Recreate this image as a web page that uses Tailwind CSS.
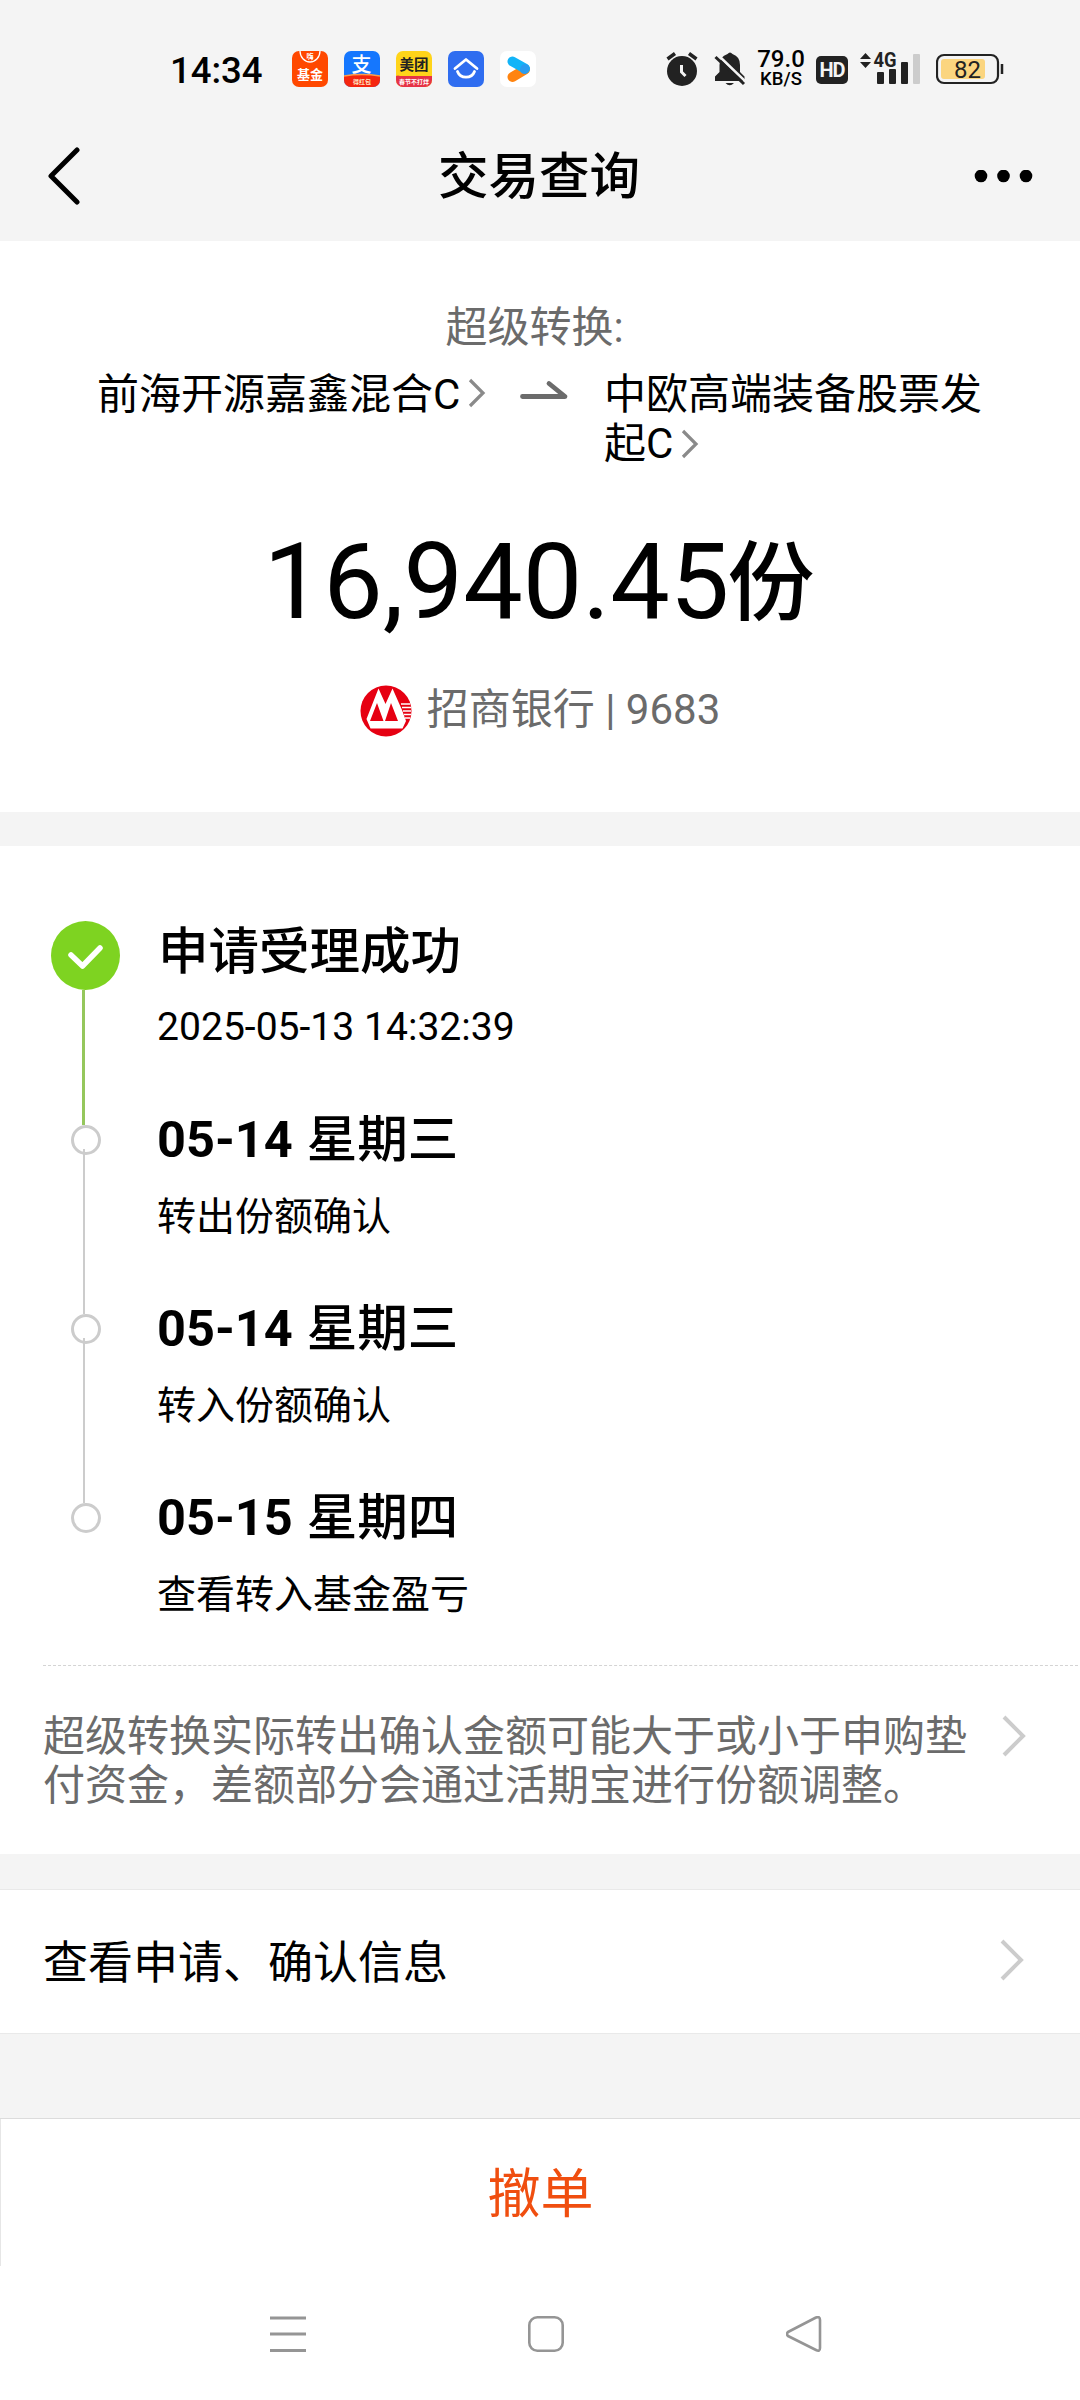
<!doctype html>
<html lang="zh-CN">

<head>
  <meta charset="UTF-8" />
  <meta name="viewport" content="width=device-width, initial-scale=1.0" />
  <title>交易查询</title>
  <script src="https://cdn.jsdelivr.net/npm/@tailwindcss/browser@4"></script>
</head>

<body class="w-[1080px] h-[2400px] flex flex-col overflow-hidden bg-[#f4f4f4] text-black font-[Roboto,'Noto_Sans_CJK_SC',sans-serif]">

  <!-- status bar -->
  <div class="flex items-center h-[113px] pt-[25px] pl-[170px] shrink-0">
    <span class="w-[122px] pt-[3px] text-[36.5px] leading-[40px] font-medium">14:34</span>
    <div class="flex gap-4 w-[374px]">
      <svg class="size-9" viewBox="0 0 36 36">
        <rect width="36" height="36" rx="7" fill="#ff4800" />
        <path d="M8 0a10 11 0 0 0 20 0" fill="none" stroke="#fff" stroke-width="1.3" />
        <text x="18" y="8" font-size="7" font-weight="700" fill="#fff" text-anchor="middle">嗨</text>
        <text x="18" y="28" font-size="13" font-weight="700" fill="#fff" text-anchor="middle">基金</text>
      </svg>
      <svg class="size-9" viewBox="0 0 36 36">
        <rect width="36" height="36" rx="7" fill="#1577fe" />
        <path d="M0 25Q18 22 36 25V29a7 7 0 0 1-7 7H7a7 7 0 0 1-7-7z" fill="#f5260f" />
        <path d="M0 25Q18 22 36 25" fill="none" stroke="#ff9c4a" stroke-width="1.5" />
        <text x="17.500" y="21" font-size="20" font-weight="500" fill="#fff" text-anchor="middle">支</text>
        <text x="18" y="32.500" font-size="6" font-weight="700" fill="#ffe9c8" text-anchor="middle">得红包</text>
      </svg>
      <svg class="size-9" viewBox="0 0 36 36">
        <rect width="36" height="36" rx="7" fill="#ffd41a" />
        <path d="M0 25Q2 24 4 25H36V29a7 7 0 0 1-7 7H7a7 7 0 0 1-7-7z" fill="#e63246" />
        <text x="18" y="19" font-size="14.500" font-weight="700" fill="#222" text-anchor="middle">美团</text>
        <text x="18" y="33" font-size="6" font-weight="700" fill="#fff" text-anchor="middle">春节不打烊</text>
      </svg>
      <svg class="size-9" viewBox="0 0 36 36">
        <rect width="36" height="36" rx="7" fill="#2f6df0" />
        <path d="M7 17.500L18 8.500L29 17.500" fill="none" stroke="#fff" stroke-width="2.800" stroke-linecap="round" stroke-linejoin="round" />
        <path d="M9.500 20.500a9 8.500 0 0 0 17 0" fill="none" stroke="#fff" stroke-width="2.800" stroke-linecap="round" />
      </svg>
      <svg class="size-9" viewBox="0 0 36 36">
        <rect width="36" height="36" rx="7" fill="#fff" />
        <path d="M12.500 26L25 18.500" stroke="#ff8410" stroke-width="10" stroke-linecap="round" />
        <path d="M12.500 10.500L25 17.500" stroke="#12b4f8" stroke-width="10" stroke-linecap="round" />
        <path d="M25 17.500L24.500 18.500" stroke="#2a9cf0" stroke-width="9" stroke-linecap="round" />
      </svg>
    </div>
    <!-- alarm -->
    <svg class="w-8 h-9 mr-4" viewBox="0 0 32 36" fill="none" stroke="#222">
      <circle cx="16" cy="20" r="15" fill="#222" stroke="none" />
      <path d="M1.500 8L9 2.500M23 2.500L30.500 8" stroke-width="3.500" />
      <path d="M15.500 14V21L19.500 25" stroke="#f4f4f4" stroke-width="3" />
    </svg>
    <!-- muted bell -->
    <svg class="w-8 h-9 mr-3" viewBox="0 0 32 36">
      <path d="M13.500 3Q16 0 18.500 3Q26 5.500 26 14V21L30.500 25.500V30H1V25.500L5.500 21V14Q5.500 5.500 13.500 3z" fill="#222" />
      <path d="M11.500 32H20Q15.700 36.500 11.500 32z" fill="#222" />
      <path d="M4 4L32 31" stroke="#f4f4f4" stroke-width="2.500" />
      <path d="M1.500 6L30 33" stroke="#222" stroke-width="3" />
    </svg>
    <div class="w-[48px] mr-[10px] -ml-px flex flex-col items-center font-medium whitespace-nowrap">
      <span class="text-[24px] leading-[20px]">79.0</span>
      <span class="text-[18.5px] leading-[20px]">KB/S</span>
    </div>
    <div class="w-8 h-7 mt-0.5 ml-px mr-3 rounded-[5px] bg-[#222] text-[#f4f4f4] text-[20px] leading-[28px] font-bold text-center tracking-[-1px]">HD</div>
    <!-- mobile signal -->
    <svg class="w-[62px] h-9 mr-[14px] overflow-visible" viewBox="0 0 62 36" fill="#222">
      <path d="M0 8L5.500 2L11 8zM0 11H11L5.500 17z" />
      <text x="13.500" y="16" font-size="20" font-weight="700" textLength="23" lengthAdjust="spacingAndGlyphs">4G</text>
      <rect x="17" y="21" width="7" height="12" rx="1" />
      <rect x="29" y="18" width="7" height="15" rx="1" />
      <rect x="41" y="11" width="7" height="22" rx="1" />
      <rect x="53" y="3" width="7" height="30" rx="1" fill="#ccc" />
    </svg>
    <!-- battery -->
    <svg class="w-[68px] h-9" viewBox="0 0 68 36">
      <rect x="1" y="4" width="61" height="28" rx="7" fill="#f4f4f4" stroke="#222" stroke-width="2.200" />
      <rect x="5" y="8" width="44" height="20" rx="3" fill="#fbd57f" />
      <path d="M66 13V23" stroke="#222" stroke-width="2.500" />
      <text x="31.500" y="26.500" font-size="24" text-anchor="middle" fill="#222">82</text>
    </svg>
  </div>

  <!-- title bar -->
  <header class="flex items-center justify-between h-32 pl-[46px] pr-[46px] shrink-0">
    <svg class="w-[60px] h-[60px]" viewBox="0 0 60 60" fill="none" stroke="#000" stroke-width="5" stroke-linecap="round" stroke-linejoin="round">
      <path d="M31 3L5 29L31 55" />
    </svg>
    <h1 class="-ml-0.5 text-[50.5px] leading-[60px] font-medium">交易查询</h1>
    <svg class="w-[60px] h-[14px]" viewBox="0 0 60 14">
      <circle cx="7" cy="6" r="6.300" />
      <circle cx="29.500" cy="6" r="6.300" />
      <circle cx="52" cy="6" r="6.300" />
    </svg>
  </header>

  <!-- conversion summary -->
  <section class="h-[571px] pt-[62px] bg-white shrink-0">
    <p class="pr-[11px] text-center text-[42px] leading-[49px] text-[#6b6b6b]">超级转换:</p>
    <div class="flex mt-[18px] pl-[97px] text-[42px] leading-[49px]">
      <div class="flex w-[423px]">
        <span>前海开源嘉鑫混合C</span>
        <svg class="w-5 h-[30px] ml-[7px] mt-2" viewBox="0 0 20 30" fill="none" stroke="#8a8a8a" stroke-width="3.200"><path d="M3 2L16 15L3 28" /></svg>
      </div>
      <svg class="w-[50px] h-5 mt-[10px] mr-[34px]" viewBox="0 0 50 20" fill="none" stroke="#6b6b6b" stroke-width="4.800" stroke-linecap="round" stroke-linejoin="round"><path d="M2.500 16.500H45L29 3.500" /></svg>
      <div class="w-[390px]">中欧高端装备股票发<br />起C<svg class="inline-block align-[-1px] w-5 h-[30px] ml-[7px]" viewBox="0 0 20 30" fill="none" stroke="#8a8a8a" stroke-width="3.200"><path d="M3 2L16 15L3 28" /></svg></div>
    </div>
    <p class="h-[120px] mt-[54px] pr-[2px] text-center text-[106px] leading-[120px]">16,940.45<span class="inline-block align-[4px] -ml-0.5 text-[87px] leading-[60px] font-medium">份</span></p>
    <div class="flex items-center justify-center mt-[43px] h-[52px] text-[42px] leading-[52px] text-[#6b6b6b]">
      <svg class="size-[52px] mr-[15px]" viewBox="0 0 52 52">
        <circle cx="26" cy="26" r="25.500" fill="#e60012" />
        <path d="M6.500 34L18.500 3.500L25.500 19L32.500 3.500L42 25L46 36L42.500 43.500H10.500z" fill="#fff" />
        <path d="M10 36L17 18L23.500 36M25 36L31 18L38 36" fill="#e60012" />
        <path d="M41 19H50M42 22.500H51M43 26H51M44 29.500H51M45 33H50" stroke="#fff" stroke-width="1.500" />
      </svg>
      <span class="-mt-0.5">招商银行 | 9683</span>
    </div>
  </section>

  <!-- progress -->
  <section class="h-[1008px] mt-[34px] pt-[75px] bg-white shrink-0">
    <ol class="pl-[51px]">
      <li class="flex h-[188px]">
        <div class="flex flex-col items-center w-[69px] mr-[37px]">
          <svg class="size-[69px] shrink-0" viewBox="0 0 69 69">
            <circle cx="34.500" cy="34.500" r="34.500" fill="#7ed321" />
            <path d="M20 34L31.500 45L49 27" fill="none" stroke="#fff" stroke-width="5.500" stroke-linecap="round" stroke-linejoin="round" />
          </svg>
          <div class="flex-1 w-[3px] -ml-[4px] -mb-4 bg-[#95c75c]"></div>
        </div>
        <div>
          <h2 class="mt-px text-[50.5px] leading-[60px] font-medium pl-px">申请受理成功</h2>
          <p class="mt-[21px] text-[39.1px] leading-[48px]">2025-05-13 14:32:39</p>
        </div>
      </li>
      <li class="flex h-[189px]">
        <div class="flex flex-col items-center w-[70px] mr-[36px] pt-4">
          <div class="size-[30px] shrink-0 rounded-full border-3 border-[#ccc]"></div>
          <div class="flex-1 w-[2px] -ml-[4px] -mt-[6px] -mb-4 bg-[#ccc]"></div>
        </div>
        <div>
          <h2 class="mt-px text-[50.5px] leading-[60px] font-bold">05-14<span class="ml-[14px] font-medium">星期三</span></h2>
          <p class="mt-[23px] text-[39px] leading-[48px]">转出份额确认</p>
        </div>
      </li>
      <li class="flex h-[189px]">
        <div class="flex flex-col items-center w-[70px] mr-[36px] pt-4">
          <div class="size-[30px] shrink-0 rounded-full border-3 border-[#ccc]"></div>
          <div class="flex-1 w-[2px] -ml-[4px] -mt-[6px] -mb-4 bg-[#ccc]"></div>
        </div>
        <div>
          <h2 class="mt-px text-[50.5px] leading-[60px] font-bold">05-14<span class="ml-[14px] font-medium">星期三</span></h2>
          <p class="mt-[23px] text-[39px] leading-[48px]">转入份额确认</p>
        </div>
      </li>
      <li class="flex h-[178px]">
        <div class="flex flex-col items-center w-[70px] mr-[36px] pt-4">
          <div class="size-[30px] shrink-0 rounded-full border-3 border-[#ccc]"></div>
        </div>
        <div>
          <h2 class="mt-px text-[50.5px] leading-[60px] font-bold">05-15<span class="ml-[14px] font-medium">星期四</span></h2>
          <p class="mt-[23px] text-[39px] leading-[48px]">查看转入基金盈亏</p>
        </div>
      </li>
    </ol>
    <div class="flex ml-[43px] mr-[2px] pt-[46px] border-t border-dashed border-[#d4d4d4]">
      <p class="w-[930px] text-[42px] leading-[49px] text-[#6b6b6b]">超级转换实际转出确认金额可能大于或小于申购垫付资金，差额部分会通过活期宝进行份额调整。</p>
      <svg class="w-[28px] h-[44px] ml-[28px] mt-0.5" viewBox="0 0 28 44" fill="none" stroke="#ccc" stroke-width="4"><path d="M3 3L22 22L3 41" /></svg>
    </div>
  </section>

  <!-- details link -->
  <a class="flex items-center justify-between h-[145px] mt-[35px] pl-[43px] pr-[53px] bg-white border-y border-[#e9e9e9] text-[45px] leading-[54px] shrink-0">
    <span class="pt-1">查看申请、确认信息</span>
    <svg class="w-[28px] h-[44px] -mt-[3px]" viewBox="0 0 28 44" fill="none" stroke="#ccc" stroke-width="4"><path d="M3 3L22 22L3 41" /></svg>
  </a>

  <footer class="flex-1 flex flex-col mt-[84px] bg-white border-t border-[#dcdcdc]">
    <button class="h-[147px] pt-1 border-l border-[#e6e6e6] text-[53px] leading-[60px] text-[#f04e0f]">撤单</button>
    <!-- system navigation -->
    <nav class="flex items-center justify-between h-[136px] pl-[270px] pr-[258px]">
      <svg class="size-9" viewBox="0 0 36 36" stroke="#959595" stroke-width="3"><path d="M0 2H36M0 18H36M0 34.500H36" /></svg>
      <svg class="size-9" viewBox="0 0 36 36" fill="none" stroke="#959595" stroke-width="2.600"><rect x="1.300" y="1.300" width="33.400" height="33.400" rx="8" /></svg>
      <svg class="size-9" viewBox="0 0 36 36" fill="none" stroke="#959595" stroke-width="2.600" stroke-linejoin="round"><path d="M2 16L30 1.500Q34 0 34 4V32Q34 36 30 34L2 20Q0 18 2 16z" /></svg>
    </nav>
  </footer>

</body>

</html>
